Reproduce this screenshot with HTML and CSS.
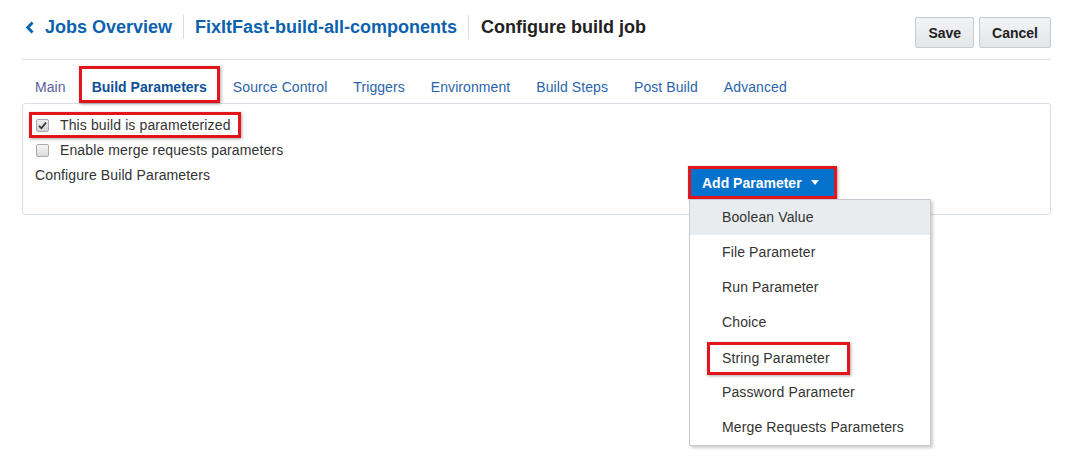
FILE: index.html
```html
<!DOCTYPE html>
<html lang="en">
<head>
<meta charset="utf-8">
<title>Configure build job</title>
<link rel="stylesheet" href="styles.css">
</head>
<body>
<div class="page">
  <header class="header">
    <div class="title">
      <svg class="chev" width="8" height="13" viewBox="0 0 8 13"><polyline points="6.5,1.5 1.8,6.5 6.5,11.5" fill="none" stroke="#0d62ad" stroke-width="2.8" stroke-linejoin="miter"/></svg>
      <a class="crumb" href="#">Jobs Overview</a>
      <span class="sep"></span>
      <a class="crumb" href="#">FixItFast-build-all-components</a>
      <span class="sep sep2"></span>
      <span class="current">Configure build job</span>
    </div>
    <div class="actions">
      <button class="btn">Save</button>
      <button class="btn">Cancel</button>
    </div>
  </header>

  <nav class="tabs">
    <a class="tab tab-visited" href="#">Main</a>
    <a class="tab tab-active hl" href="#">Build Parameters</a>
    <a class="tab" href="#">Source Control</a>
    <a class="tab" href="#">Triggers</a>
    <a class="tab" href="#">Environment</a>
    <a class="tab" href="#">Build Steps</a>
    <a class="tab" href="#">Post Build</a>
    <a class="tab" href="#">Advanced</a>
  </nav>

  <section class="panel">
    <div class="row">
      <label class="check hl hl-row">
        <span class="box checked"><svg width="9" height="9" viewBox="0 0 9 9"><path d="M1 4.8 L3.4 7.2 L8 1.6" fill="none" stroke="#3a3a3a" stroke-width="1.8"/></svg></span>
        <span>This build is parameterized</span>
      </label>
    </div>
    <div class="row">
      <label class="check">
        <span class="box"></span>
        <span>Enable merge requests parameters</span>
      </label>
    </div>
    <div class="row row-params">
      <span class="params-label">Configure Build Parameters</span>
      <div class="add-wrap">
        <button class="add-btn hl hl-btn">Add Parameter <span class="caret"></span></button>
        <ul class="menu">
          <li class="menu-item hover">Boolean Value</li>
          <li class="menu-item">File Parameter</li>
          <li class="menu-item">Run Parameter</li>
          <li class="menu-item">Choice</li>
          <li class="menu-item"><span class="hl hl-item">String Parameter</span></li>
          <li class="menu-item">Password Parameter</li>
          <li class="menu-item">Merge Requests Parameters</li>
        </ul>
      </div>
    </div>
  </section>
</div>
</body>
</html>
```

FILE: styles.css
```css
* { box-sizing: border-box; }

html, body {
  margin: 0;
  padding: 0;
  background: #fff;
  min-height: 100%;
}

body {
  font-family: "Liberation Sans", Arial, sans-serif;
  font-size: 14px;
  color: #333;
}

.page {
  min-height: 467px;
  padding: 0 24px 0 22px;
}

/* header */
.header {
  display: flex;
  justify-content: space-between;
  align-items: flex-start;
  height: 60px;
  border-bottom: 1px solid #d8dfe5;
}

.title {
  display: flex;
  align-items: center;
  height: 24px;
  margin-top: 15px;
  font-size: 18px;
  font-weight: bold;
  line-height: 24px;
}

.chev {
  margin-left: 4px;
  margin-right: 11px;
  display: block;
}

.crumb {
  color: #0d62ad;
  text-decoration: none;
}

.current {
  color: #222;
}

.sep {
  width: 1px;
  height: 24px;
  background: #d8dfe5;
  margin: 0 11px;
}

.sep2 {
  margin-right: 12px;
}

.actions {
  display: flex;
  gap: 5px;
  margin-top: 17px;
}

.btn {
  height: 31px;
  padding: 0 12px;
  font-family: inherit;
  font-size: 14px;
  font-weight: bold;
  color: #222;
  background: linear-gradient(#f1f3f5, #e4e7ea);
  border: 1px solid #c5cbd0;
  border-radius: 2px;
}

/* tabs */
.tabs {
  display: flex;
  margin-top: 6px;
}

.tab {
  display: block;
  padding: 11px 13px 6px;
  line-height: 20px;
  letter-spacing: 0.08px;
  color: #2b64ad;
  text-decoration: none;
}

.tab-visited {
  color: #5a5d9e;
}

.tab-active {
  font-weight: bold;
  letter-spacing: 0;
  color: #0e4f98;
}

/* annotation boxes */
.hl {
  position: relative;
}

.hl::after {
  content: "";
  position: absolute;
  top: 0;
  right: 0;
  bottom: 0;
  left: 0;
  border: 3px solid #e3141b;
  box-shadow: 1px 1px 3px rgba(0, 0, 0, 0.35);
  pointer-events: none;
}

.hl-row::after {
  top: -1px;
  bottom: 0;
  left: -6px;
  right: -10px;
}

.hl-btn::after {
  top: -2px;
  bottom: -2px;
  left: -2px;
  right: -3px;
}

.hl-item::after {
  top: -6px;
  bottom: -7px;
  left: -15px;
  right: -20px;
}

/* panel */
.panel {
  border: 1px solid #d8dfe5;
  border-radius: 3px;
  padding: 9px 13px 17px 12px;
  letter-spacing: 0.12px;
}

.row {
  display: flex;
  height: 25px;
  line-height: 25px;
}

.check {
  display: flex;
  align-items: center;
  height: 25px;
  color: #333;
}

.box {
  width: 13px;
  height: 13px;
  margin-left: 1px;
  margin-right: 11px;
  border: 1px solid #a8acb0;
  border-radius: 2px;
  background: linear-gradient(#f6f6f6, #dcdcdc);
  display: flex;
  align-items: center;
  justify-content: center;
}

.box.checked {
  background: linear-gradient(#eeeeee, #d2d2d2);
}

.box svg {
  display: block;
}

.row-params {
  display: grid;
  height: auto;
  grid-template-columns: 655px auto;
  align-items: start;
}

.add-wrap {
  position: relative;
  margin-top: 5px;
  justify-self: start;
}

.add-btn {
  display: flex;
  align-items: center;
  height: 29px;
  padding: 0 15px 0 12px;
  font-family: inherit;
  font-size: 14px;
  font-weight: bold;
  letter-spacing: 0;
  color: #fff;
  background: #0572ce;
  border: none;
  border-radius: 0;
}

.caret {
  display: inline-block;
  width: 0;
  height: 0;
  margin-left: 9px;
  border-left: 4px solid transparent;
  border-right: 4px solid transparent;
  border-top: 5px solid #fff;
}

.menu {
  position: absolute;
  top: calc(100% + 2px);
  left: -1px;
  width: 242px;
  margin: 0;
  padding: 0;
  list-style: none;
  background: #fff;
  border: 1px solid #c5cbd0;
  box-shadow: 2px 2px 3px rgba(0, 0, 0, 0.2);
  z-index: 2;
}

.menu-item {
  height: 35px;
  line-height: 35px;
  padding-left: 32px;
  color: #333;
}

.menu-item .hl-item {
  display: inline-block;
  line-height: 20px;
  vertical-align: middle;
}

.menu-item.hover {
  background: #e9ecef;
}
```
